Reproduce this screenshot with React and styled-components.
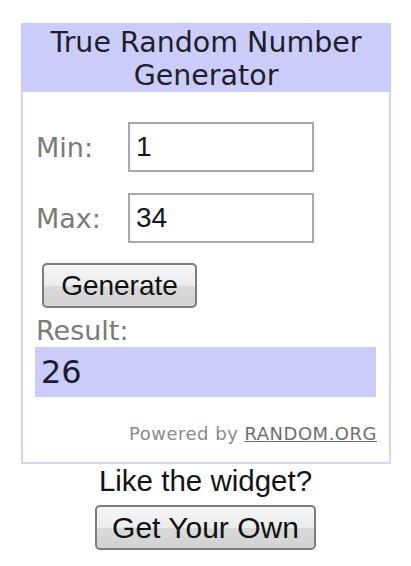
import React from 'react'
import styled, { createGlobalStyle } from 'styled-components'

const GlobalStyle = createGlobalStyle`
    body {
        margin: 0;
        background: #ffffff;
    }
`

const Page = styled.div`
    width: 411px;
    padding-top: 23px;
    display: flex;
    flex-direction: column;
    align-items: center;
`

const Widget = styled.div`
    width: 366px;
    margin-left: 1px;
    border: 2px solid #d4d4f6;
    border-top: none;
    background: #ffffff;
    font-family: 'DejaVu Sans', Verdana, sans-serif;
`

const Header = styled.div`
    background: #ccccfa;
    margin: 0 -2px;
    height: 69px;
    box-sizing: border-box;
    padding-top: 3px;
    text-align: center;
    font-size: 28.5px;
    line-height: 33px;
    color: #1e1e2c;
`

const Body = styled.div`
    padding: 30px 12px 18px 13px;
`

const FieldRow = styled.div`
    display: grid;
    grid-template-columns: 92px 186px;
    align-items: center;
    margin-bottom: ${(p) => p.gap}px;
`

const Label = styled.div`
    font-size: 27px;
    color: #7a7a7a;
`

const Input = styled.div`
    height: 46px;
    border: 2px solid #a9a9a9;
    background: #fff;
    display: flex;
    align-items: center;
    padding-left: 6px;
    font-family: 'Liberation Sans', Arial, sans-serif;
    font-size: 28px;
    color: #15151f;
`

const Button = styled.button`
    display: inline-flex;
    align-items: center;
    justify-content: center;
    height: ${(p) => p.h}px;
    width: ${(p) => p.w}px;
    padding: 0;
    border: 2px solid #7d7d7d;
    border-radius: 5px;
    background: linear-gradient(#f6f6f6, #ececec 50%, #dadada 51%, #d2d2d2);
    font-family: 'Liberation Sans', Arial, sans-serif;
    font-size: ${(p) => p.fs}px;
    color: #111;
`

const ResultLabel = styled(Label)`
    margin-top: 7px;
    line-height: 32px;
`

const ResultBox = styled.div`
    height: 50px;
    width: 341px;
    margin-left: -1px;
    background: #ccccfa;
    display: flex;
    align-items: center;
    padding-left: 6px;
    box-sizing: border-box;
    font-size: 32px;
    color: #1c1c30;
`

const Powered = styled.div`
    margin-top: 26px;
    text-align: right;
    font-size: 18px;
    letter-spacing: 0.5px;
    color: #8a8a8a;

    span {
        color: #6e6e6e;
        text-decoration: underline;
    }
`

const Like = styled.div`
    font-family: 'Liberation Sans', Arial, sans-serif;
    font-size: 29.5px;
    line-height: 34px;
    color: #141418;
`

const App = () => {
    return (
        <Page>
            <GlobalStyle />
            <Widget>
                <Header>
                    True Random Number
                    <br />
                    Generator
                </Header>
                <Body>
                    <FieldRow gap={21}>
                        <Label>Min:</Label>
                        <Input>1</Input>
                    </FieldRow>
                    <FieldRow gap={20}>
                        <Label>Max:</Label>
                        <Input>34</Input>
                    </FieldRow>
                    <Button w={155} h={45} fs={28} style={{ marginLeft: 6 }}>Generate</Button>
                    <ResultLabel>Result:</ResultLabel>
                    <ResultBox>26</ResultBox>
                    <Powered>
                        Powered by <span>RANDOM.ORG</span>
                    </Powered>
                </Body>
            </Widget>
            <Like>Like the widget?</Like>
            <Button w={221} h={45} fs={30} style={{ marginTop: 7 }}>Get Your Own</Button>
        </Page>
    )
}

export default App
